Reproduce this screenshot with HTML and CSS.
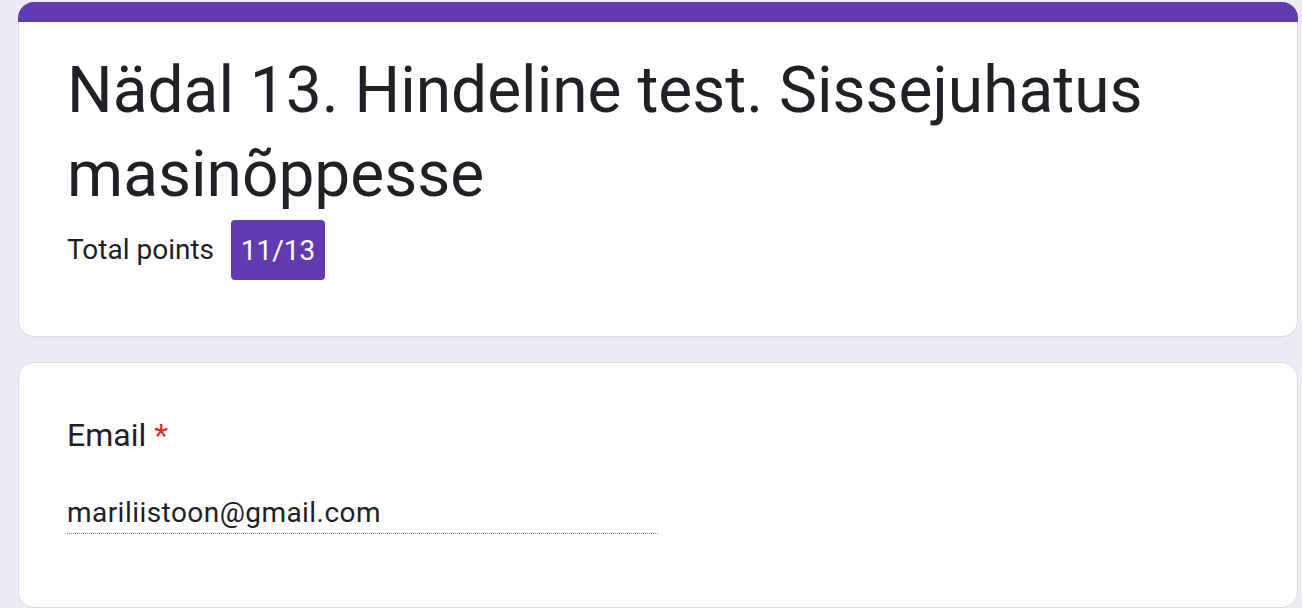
FILE: index.html
```html
<!DOCTYPE html>
<html lang="et">
<head>
<meta charset="utf-8">
<title>Nädal 13. Hindeline test</title>
<link rel="stylesheet" href="styles.css">
</head>
<body>
<div class="container">
  <div class="header-card">
    <div class="header-bar"></div>
    <div class="header-body">
      <h1 class="title">Nädal 13. Hindeline test. Sissejuhatus masinõppesse</h1>
      <div class="points-row">
        <span class="points-label">Total points</span>
        <span class="points-badge">11/13</span>
      </div>
    </div>
  </div>
  <div class="question-card">
    <div class="question-title">Email <span class="required">*</span></div>
    <div class="answer">mariliistoon@gmail.com</div>
  </div>
</div>
</body>
</html>
```
FILE: styles.css
```css
html, body {
  margin: 0;
  padding: 0;
  background: #efeaf7;
  font-family: Roboto, "Noto Sans", Arial, sans-serif;
  color: #202124;
}
.container {
  width: 1280px;
  padding: 2px 0 0 18px;
}
.header-card {
  display: flex;
  flex-direction: column;
}
.header-bar {
  height: 20px;
  background: #633bb1;
  border-radius: 16px 16px 0 0;
}
.header-body {
  background: #fff;
  border: 1px solid #dadce0;
  border-top: none;
  border-radius: 0 0 16px 16px;
  padding: 27px 48px 56px 48px;
}
.title {
  margin: 0;
  font-size: 64px;
  line-height: 84px;
  font-weight: 400;
  color: #202124;
}
.points-row {
  display: flex;
  align-items: center;
  gap: 17px;
  margin-top: 3px;
}
.points-label {
  font-size: 28px;
  line-height: 40px;
}
.points-badge {
  display: flex;
  align-items: center;
  justify-content: center;
  height: 60px;
  width: 94px;
  background: #633bb1;
  color: #fff;
  border-radius: 4px;
  font-size: 28px;
}
.question-card {
  margin-top: 25px;
  background: #fff;
  border: 1px solid #dadce0;
  border-radius: 16px;
  padding: 48px;
}
.question-title {
  font-size: 32px;
  line-height: 48px;
}
.required {
  color: #d93025;
}
.answer {
  margin-top: 34px;
  width: 50%;
  font-size: 28px;
  line-height: 40px;
  letter-spacing: 0.45px;
  border-bottom: 1px dotted #80868b;
  margin-bottom: 25px;
}
```
